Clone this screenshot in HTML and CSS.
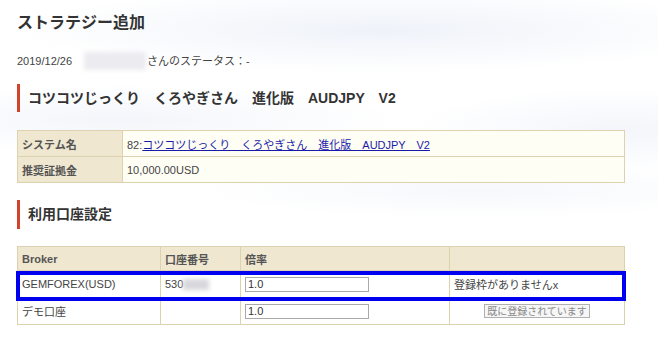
FILE: index.html
```html
<!DOCTYPE html>
<html lang="ja">
<head>
<meta charset="utf-8">
<title>ストラテジー追加</title>
<link rel="stylesheet" href="styles.css">
</head>
<body>
<div class="page">
  <h1 class="title">ストラテジー追加</h1>
  <p class="status"><span>2019/12/26</span><span class="blur-name"></span><span>さんのステータス：-</span></p>

  <h2 class="section">コツコツじっくり　くろやぎさん　進化版　AUDJPY　V2</h2>
  <table class="info">
    <tr><th>システム名</th><td>82:<a href="#">コツコツじっくり　くろやぎさん　進化版　AUDJPY　V2</a></td></tr>
    <tr><th>推奨証拠金</th><td>10,000.00USD</td></tr>
  </table>

  <h2 class="section section2">利用口座設定</h2>
  <div class="accounts-wrap">
    <table class="accounts">
      <tr class="head"><th class="c1">Broker</th><th class="c2">口座番号</th><th class="c3">倍率</th><th class="c4"></th></tr>
      <tr class="r1"><td>GEMFOREX(USD)</td><td><span class="acct">530<span class="blur-num"></span></span></td><td><input class="rate" type="text" value="1.0"></td><td>登録枠がありませんx</td></tr>
      <tr class="r2"><td>デモ口座</td><td></td><td><input class="rate" type="text" value="1.0"></td><td class="center"><button class="btn" disabled>既に登録されています</button></td></tr>
    </table>
    <div class="highlight"></div>
  </div>
</div>
</body>
</html>
```

FILE: styles.css
```css
html, body {
  margin: 0;
  padding: 0;
}
body {
  width: 658px;
  height: 358px;
  overflow: hidden;
  font-family: "Liberation Sans", "Noto Sans CJK JP", sans-serif;
  color: #444;
  background:
    radial-gradient(ellipse 520px 60px at 380px 30px, rgba(225,232,244,0.55), rgba(255,255,255,0) 70%),
    radial-gradient(ellipse 400px 50px at 120px 120px, rgba(228,234,245,0.45), rgba(255,255,255,0) 70%),
    radial-gradient(ellipse 300px 60px at 620px 130px, rgba(228,234,245,0.45), rgba(255,255,255,0) 70%),
    radial-gradient(ellipse 400px 40px at 480px 190px, rgba(232,237,246,0.4), rgba(255,255,255,0) 70%),
    #ffffff;
}
.page {
  padding: 15px 33px 0 17px;
}
.title {
  margin: 0;
  font-size: 16px;
  line-height: 16px;
  height: 16px;
  font-weight: bold;
  color: #333;
}
.status {
  margin: 22px 0 0;
  font-size: 11px;
  line-height: 16px;
  height: 16px;
  color: #444;
  display: flex;
  align-items: center;
}
.blur-name {
  display: inline-block;
  width: 62px;
  height: 18px;
  margin: 0 1px 0 12px;
  background: #ececf0;
  filter: blur(2px);
}
.section {
  margin: 15px 0 0;
  height: 28px;
  border-left: 3px solid #d3432b;
  padding-left: 8px;
  font-size: 14px;
  line-height: 28px;
  font-weight: bold;
  color: #333;
}
.section2 {
  margin-top: 17px;
  height: 29px;
  line-height: 29px;
}
table {
  border-collapse: collapse;
  width: 608px;
  font-size: 11px;
}
.info {
  margin-top: 18px;
}
.info th, .info td {
  border: 1px solid #ddd2b0;
  height: 25px;
  padding: 0 4px;
  text-align: left;
}
.info th {
  width: 96px;
  background: #f0e7d0;
  color: #555;
  font-weight: bold;
}
.info td {
  background: #fffef4;
  color: #444;
}
.info a {
  color: #1a1aaa;
  text-decoration: underline;
}
.accounts-wrap {
  position: relative;
  margin-top: 17px;
}
.accounts th, .accounts td {
  border: 1px solid #ddd2b0;
  padding: 0 4px;
  text-align: left;
}
.accounts th {
  height: 23px;
  background: #f0e7d0;
  color: #555;
  font-weight: bold;
}
.accounts td {
  height: 26px;
  background: #ffffff;
  color: #444;
}
.accounts .c1 { width: 134px; }
.accounts .c2 { width: 71px; }
.accounts .c3 { width: 200px; }
.accounts td.center { text-align: center; }
.acct {
  display: inline-flex;
  align-items: center;
}
.blur-num {
  display: inline-block;
  width: 26px;
  height: 11px;
  background: #d8d8dc;
  filter: blur(2px);
}
.rate {
  box-sizing: border-box;
  width: 124px;
  height: 15px;
  margin: 0;
  padding: 0 2px;
  border: 1px solid #a9a9a9;
  font-family: "Liberation Sans", sans-serif;
  font-size: 11px;
  color: #333;
  background: #fff;
  vertical-align: middle;
}
.btn {
  box-sizing: border-box;
  height: 14px;
  padding: 0 2px;
  margin: 0;
  border: 1px solid #b0b0b0;
  background: #f6f6f6;
  font-family: "Noto Sans CJK JP", sans-serif;
  font-size: 10px;
  line-height: 12px;
  color: #888;
  vertical-align: middle;
}
.highlight {
  position: absolute;
  left: -1px;
  top: 25px;
  width: 602px;
  height: 22px;
  border: 4px solid #0000f0;
  pointer-events: none;
}
```
